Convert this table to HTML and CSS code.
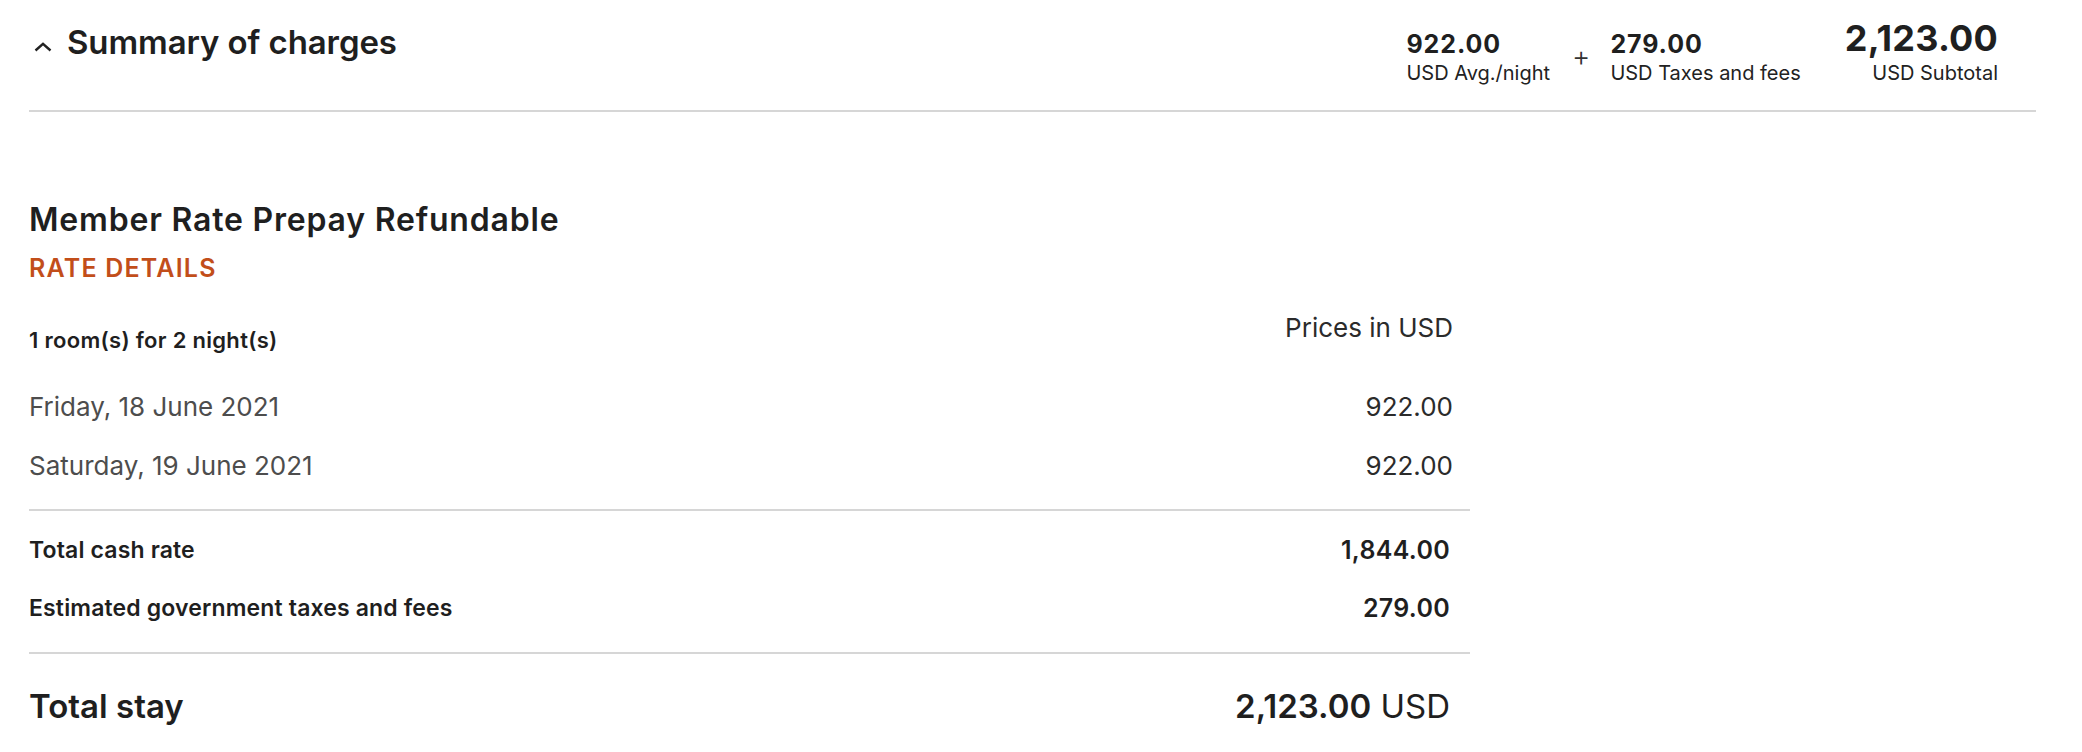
FILE: index.html
```html
<!DOCTYPE html>
<html lang="en">
<head>
<meta charset="utf-8">
<title>Summary of charges</title>
<link rel="stylesheet" href="styles.css">
</head>
<body>
<div class="page">
  <header class="summary-bar">
    <h1 class="summary-title">
      <svg class="chevron" width="18" height="10" viewBox="0 0 18 10" aria-hidden="true"><path d="M1.5 8.5 L9 1.8 L16.5 8.5" fill="none" stroke="#222" stroke-width="2.4"/></svg>
      <span>Summary of charges</span>
    </h1>
    <div class="totals">
      <div class="tot">
        <div class="tot-num">922.00</div>
        <div class="tot-label">USD Avg./night</div>
      </div>
      <div class="plus">+</div>
      <div class="tot">
        <div class="tot-num">279.00</div>
        <div class="tot-label">USD Taxes and fees</div>
      </div>
      <div class="tot tot-sub">
        <div class="tot-num tot-big">2,123.00</div>
        <div class="tot-label">USD Subtotal</div>
      </div>
    </div>
  </header>

  <section class="rate">
    <h2 class="rate-name">Member Rate Prepay Refundable</h2>
    <div class="rate-link">RATE DETAILS</div>

    <div class="rate-head">
      <div class="rooms">1 room(s) for 2 night(s)</div>
      <div class="currency">Prices in USD</div>
    </div>

    <div class="nights">
      <div class="night"><span>Friday, 18 June 2021</span><span class="price">922.00</span></div>
      <div class="night"><span>Saturday, 19 June 2021</span><span class="price">922.00</span></div>
    </div>

    <div class="sums">
      <div class="sum"><span>Total cash rate</span><span class="sum-val">1,844.00</span></div>
      <div class="sum"><span>Estimated government taxes and fees</span><span class="sum-val">279.00</span></div>
    </div>

    <div class="grand">
      <span>Total stay</span>
      <span class="grand-val"><b>2,123.00</b> USD</span>
    </div>
  </section>
</div>
</body>
</html>
```

FILE: styles.css
```css
* { box-sizing: border-box; }
html, body { margin: 0; padding: 0; background: #fff; }
body {
  font-family: Inter, "Noto Sans", "Liberation Sans", sans-serif;
  color: #1f1f1f;
}
.page { padding: 0 46px 0 29px; }

.summary-bar {
  display: flex;
  justify-content: space-between;
  align-items: flex-start;
  padding: 17px 38px 25px 0;
  border-bottom: 2px solid #d6d6d6;
}
.summary-title {
  display: flex;
  align-items: center;
  gap: 15px;
  margin: 5px 0 0 5px;
  font-size: 33px;
  line-height: 40px;
  font-weight: 600;
  letter-spacing: -0.1px;
}
.chevron { margin-top: 10px; }

.totals { display: flex; align-items: flex-end; }
.tot { display: flex; flex-direction: column; }
.tot-num { font-size: 25px; line-height: 30px; font-weight: 700; letter-spacing: 0.9px; }
.tot-big { font-size: 36px; line-height: 42px; letter-spacing: 0.2px; }
.tot-label { font-size: 20px; line-height: 24px; margin-top: 2px; color: #222; }
.tot-sub { align-items: flex-end; margin-left: 44px; }
.plus { font-size: 28px; line-height: 28px; font-weight: 300; margin: 0 20px 15px 22px; color: #333; }

.rate { width: 1441px; padding-top: 89px; }
.rate-name { margin: 0; font-size: 32px; line-height: 38px; font-weight: 600; letter-spacing: 0.8px; }
.rate-link {
  margin-top: 14px;
  font-size: 25px;
  line-height: 30px;
  font-weight: 600;
  color: #c24e1a;
  letter-spacing: 1.2px;
}
.rate-head {
  display: flex;
  justify-content: space-between;
  align-items: flex-start;
  margin-top: 29px;
  padding-right: 17px;
}
.rooms { margin-top: 14px; font-size: 22px; line-height: 28px; font-weight: 600; letter-spacing: 0.3px; }
.currency { font-size: 26px; line-height: 32px; color: #2b2b2b; }

.nights {
  margin-top: 23px;
  padding-bottom: 14px;
  border-bottom: 2px solid #d6d6d6;
}
.night {
  display: flex;
  justify-content: space-between;
  height: 59px;
  line-height: 59px;
  font-size: 26px;
  color: #4d4d4d;
  padding-right: 17px;
}
.price { color: #2b2b2b; }

.sums {
  padding: 10px 20px 15px 0;
  border-bottom: 2px solid #d6d6d6;
}
.sum {
  display: flex;
  justify-content: space-between;
  height: 58px;
  line-height: 58px;
  font-size: 23px;
  font-weight: 600;
  letter-spacing: 0.15px;
}
.sum-val { font-size: 25px; letter-spacing: 0.3px; }

.grand {
  display: flex;
  justify-content: space-between;
  margin-top: 30px;
  padding-right: 20px;
  font-size: 33px;
  line-height: 44px;
  font-weight: 600;
}
.grand-val { font-weight: 400; }
.grand-val b { font-weight: 600; }
```
